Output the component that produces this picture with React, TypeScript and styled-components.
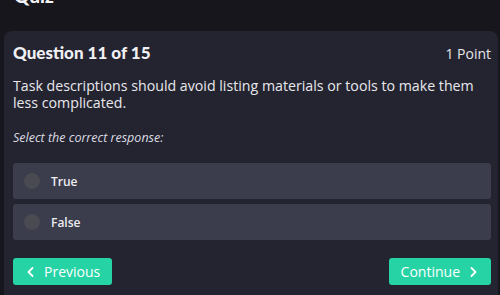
import React from "react";
import styled, { createGlobalStyle } from "styled-components";

const GlobalStyle = createGlobalStyle`
  html, body {
    margin: 0;
    padding: 0;
    background: #16161c;
    overflow: hidden;
  }
  body {
    font-family: "Open Sans", "Liberation Sans", sans-serif;
  }
`;

const options = [
  { id: 1, label: "True" },
  { id: 2, label: "False" },
];

function ChevronLeft() {
  return (
    <svg width="12" height="12" viewBox="0 0 12 12" fill="none">
      <path d="M7.5 2 L3.5 6 L7.5 10" stroke="#fff" strokeWidth="1.8" strokeLinecap="round" strokeLinejoin="round" />
    </svg>
  );
}

function ChevronRight() {
  return (
    <svg width="12" height="12" viewBox="0 0 12 12" fill="none">
      <path d="M4.5 2 L8.5 6 L4.5 10" stroke="#fff" strokeWidth="1.8" strokeLinecap="round" strokeLinejoin="round" />
    </svg>
  );
}

export default function App() {
  return (
    <>
      <GlobalStyle />
      <Page>
        <PageTitle>Quiz</PageTitle>
        <Card>
          <CardHeader>
            <Title>Question 11 of 15</Title>
            <Points>1 Point</Points>
          </CardHeader>
          <QuestionText>
            Task descriptions should avoid listing materials or tools to make them
            less complicated.
          </QuestionText>
          <Hint>Select the correct response:</Hint>
          <Options>
            {options.map((o) => (
              <Option key={o.id}>
                <Radio />
                <OptionLabel>{o.label}</OptionLabel>
              </Option>
            ))}
          </Options>
          <Footer>
            <Button>
              <ChevronLeft />
              Previous
            </Button>
            <Button>
              Continue
              <ChevronRight />
            </Button>
          </Footer>
        </Card>
      </Page>
    </>
  );
}

const Page = styled.div`
  width: 500px;
  height: 295px;
  overflow: hidden;
  padding-left: 4px;
  box-sizing: border-box;
`;

const PageTitle = styled.h1`
  margin: -14px 0 0 10px;
  height: 45px;
  font-family: Lato, "Open Sans", sans-serif;
  font-size: 19px;
  font-weight: 900;
  line-height: 20px;
  color: #f2f2f5;
`;

const Card = styled.section`
  width: 494px;
  height: 280px;
  background: #242431;
  border-radius: 8px 8px 0 0;
  padding: 10px 7px 0 9px;
  box-sizing: border-box;
`;

const CardHeader = styled.div`
  display: flex;
  justify-content: space-between;
  align-items: flex-end;
  height: 22px;
`;

const Title = styled.h2`
  margin: 0;
  font-family: Lato, "Open Sans", sans-serif;
  font-size: 17px;
  font-weight: 900;
  color: #f0f0f4;
  line-height: 20px;
`;

const Points = styled.span`
  font-size: 14px;
  color: #e6e6ea;
  line-height: 18px;
`;

const QuestionText = styled.p`
  margin: 14px 0 0;
  font-size: 14.2px;
  line-height: 17px;
  color: #e8e8ec;
`;

const Hint = styled.p`
  margin: 20px 0 0;
  font-size: 12.5px;
  font-style: italic;
  color: #dcdce2;
  line-height: 14px;
`;

const Options = styled.div`
  display: flex;
  flex-direction: column;
  gap: 5px;
  margin-top: 18px;
`;

const Option = styled.div`
  display: flex;
  align-items: center;
  height: 36px;
  background: #3b3c4c;
  border-radius: 3px;
  padding-left: 11px;
`;

const Radio = styled.span`
  width: 16px;
  height: 16px;
  border-radius: 50%;
  background: #4a4a53;
`;

const OptionLabel = styled.span`
  margin-left: 11px;
  font-size: 12px;
  font-weight: 600;
  color: #ececf0;
`;

const Footer = styled.div`
  display: flex;
  justify-content: space-between;
  margin-top: 18px;
`;

const Button = styled.button`
  display: flex;
  align-items: center;
  gap: 7px;
  height: 27px;
  padding: 0 12px;
  border: none;
  border-radius: 3px;
  background: #26d3a5;
  color: #fff;
  font-family: "Open Sans", "Liberation Sans", sans-serif;
  font-size: 14px;
`;
